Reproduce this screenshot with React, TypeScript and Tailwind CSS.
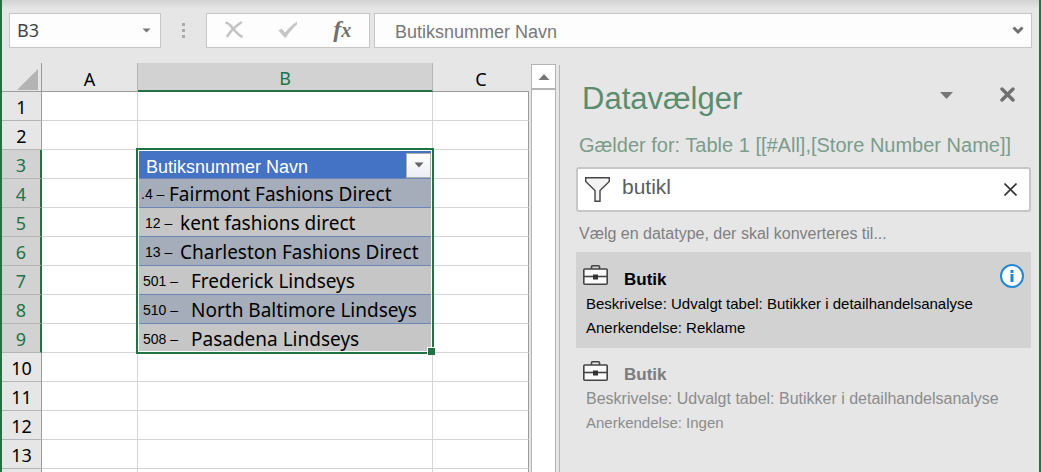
import React from "react";

type StoreRow = { id: string; name: string; prefix: string };

const stores: StoreRow[] = [
  { id: ".4 –", name: "Fairmont Fashions Direct", prefix: "w-7" },
  { id: "12 –", name: "kent fashions direct", prefix: "pl-1 w-[39px]" },
  { id: "13 –", name: "Charleston Fashions Direct", prefix: "pl-1 w-[39px]" },
  { id: "501 –", name: "Frederick Lindseys", prefix: "pl-[2px] w-[50px]" },
  { id: "510 –", name: "North Baltimore Lindseys", prefix: "pl-[2px] w-[50px]" },
  { id: "508 –", name: "Pasadena Lindseys", prefix: "pl-[2px] w-[50px]" },
];

const rowNumbers = Array.from({ length: 13 }, (_, i) => i + 1);

function FormulaBar() {
  return (
    <header className="flex h-[63px] shrink-0 items-start gap-1 bg-gradient-to-b from-[#d2d2d2] to-[#e6e6e6] to-[9px] pt-[13px] pr-[7px] pl-[7px]">
      <div className="flex h-[35px] w-[152px] shrink-0 items-center border border-[#c6c6c6] bg-[#fdfdfd] pr-2">
        <input
          aria-label="Navneboks"
          defaultValue="B3"
          className="min-w-0 flex-1 bg-transparent pl-[7px] font-['Noto_Sans',sans-serif] text-[18px] text-[#444] outline-none"
        />
        <button aria-label="Vis navne" className="flex h-6 w-3 items-center justify-center">
          <svg width="9" height="5" viewBox="0 0 9 5">
            <path d="M0.5 0.5h8L4.5 4.5z" fill="#777" />
          </svg>
        </button>
      </div>
      <div className="flex h-[35px] w-[37px] shrink-0 items-center justify-center">
        <svg width="3" height="15" viewBox="0 0 3 15" fill="#ababab">
          <rect width="3" height="3" />
          <rect y="6" width="3" height="3" />
          <rect y="12" width="3" height="3" />
        </svg>
      </div>
      <div className="flex h-[35px] w-[164px] shrink-0 items-center justify-around border border-[#c6c6c6] bg-[#fdfdfd] pb-[2px]">
        <button aria-label="Annuller">
          <svg width="18" height="17" viewBox="0 0 18 17" fill="none" stroke="#c3c3c3" strokeLinecap="round">
            <path d="M1.500 2C3 1.500 5.500 4.500 8 7.500C10.500 10.500 13 13.500 16.500 15.500" strokeWidth="2.600" />
            <path d="M16 1.500C11 5 5.500 10 2.500 15" strokeWidth="2.600" />
          </svg>
        </button>
        <button aria-label="Accepter">
          <svg width="20" height="17" viewBox="0 0 20 17">
            <path d="M0.500 9.500L3.500 7.500L7 11.500C10.500 7.500 14 3.500 19 0.500V3.500C15 7 11 11.500 8 16.500H6.500z" fill="#c6c6c6" />
          </svg>
        </button>
        <button
          aria-label="Indsæt funktion"
          className="font-['Liberation_Serif',serif] text-[24px] leading-6 font-bold text-[#707070] italic"
        >
          f<span className="text-[20px]">x</span>
        </button>
      </div>
      <div className="flex h-[35px] min-w-0 flex-1 items-center border border-[#c6c6c6] bg-[#fdfdfd] pr-[7px]">
        <input
          aria-label="Formellinje"
          defaultValue="Butiksnummer Navn"
          className="min-w-0 flex-1 bg-transparent pt-[3px] pl-5 text-[18px] text-[#78787c] outline-none"
        />
        <button aria-label="Udvid formellinje">
          <svg width="12" height="9" viewBox="0 0 12 9">
            <path d="M1.500 1.500L6 6L10.500 1.500" fill="none" stroke="#6f6f6f" strokeWidth="3" />
          </svg>
        </button>
      </div>
    </header>
  );
}

function RowHeader({ n }: { n: number }) {
  const selected = n >= 3 && n <= 9;
  return (
    <th
      scope="row"
      className={
        selected
          ? "border-r-2 border-b border-r-[#217346] border-b-[#b5b5b5] bg-[#d2d2d2] p-0 pt-[2px] font-normal text-[#217346]"
          : "border-r border-b border-r-[#9b9b9b] border-b-[#b5b5b5] bg-[#e6e6e6] p-0 pt-[2px] font-normal text-black"
      }
    >
      {n}
    </th>
  );
}

function StoreCell({ n }: { n: number }) {
  if (n === 3) {
    return (
      <td className="border-r border-b border-r-[#d4d4d4] border-b-[#6c86b8] bg-[#4472c4] p-0">
        <div className="flex h-[28px] items-center justify-between pr-px pl-2">
          <span className="pt-[6px] font-['Liberation_Sans',sans-serif] text-[18px] text-white">
            Butiksnummer Navn
          </span>
          <button
            aria-label="Filtrer"
            className="mt-[2px] flex h-[25px] w-[25px] items-center justify-center border border-[#b0b0b0] bg-gradient-to-b from-white to-[#eceef4]"
          >
            <svg width="10" height="6" viewBox="0 0 10 6">
              <path d="M0.500 0.500h9L5 5.500z" fill="#666" />
            </svg>
          </button>
        </div>
      </td>
    );
  }
  if (n > 3 && n < 10) {
    const store = stores[n - 4];
    return (
      <td
        className={
          n % 2 === 0
            ? "border-r border-b border-r-[#d4d4d4] border-b-[#6c86b8] bg-[#a5adbb] p-0"
            : "border-r border-b border-r-[#d4d4d4] border-b-[#6c86b8] bg-[#c6c6c6] p-0"
        }
      >
        <div className="flex h-7 items-center pt-[2px] pl-[3px] text-left leading-[26px] whitespace-nowrap text-black">
          <span className={`${store.prefix} shrink-0 font-['Liberation_Sans',sans-serif] text-[14px]`}>
            {store.id}
          </span>
          <span className="font-['Noto_Sans',sans-serif] text-[19px]">{store.name}</span>
        </div>
      </td>
    );
  }
  return <td className="border-r border-b border-[#d4d4d4] p-0" />;
}

function Sheet() {
  return (
    <div className="relative shrink-0 self-start">
      <table className="table-fixed border-separate border-spacing-0 bg-white text-center font-['Noto_Sans',sans-serif] text-[18px] leading-6">
        <colgroup>
          <col className="w-10" />
          <col className="w-24" />
          <col className="w-[295px]" />
          <col className="w-24" />
        </colgroup>
        <thead>
          <tr className="h-[29px] bg-[#e6e6e6]">
            <th aria-label="Marker alt" className="border-r border-b border-[#9b9b9b] p-0">
              <svg className="mt-1 ml-[15px]" width="21" height="21" viewBox="0 0 21 21">
                <path d="M21 0V21H0z" fill="#b4b4b4" />
              </svg>
            </th>
            <th className="border-r border-b border-r-[#b5b5b5] border-b-[#9b9b9b] p-0 pt-[3px] font-normal">A</th>
            <th className="border-r border-b-2 border-r-[#b5b5b5] border-b-[#217346] bg-[#d2d2d2] p-0 pt-[3px] font-normal text-[#217346]">
              B
            </th>
            <th className="border-b border-[#9b9b9b] p-0 pt-[3px] font-normal">C</th>
          </tr>
        </thead>
        <tbody>
          {rowNumbers.map((n) => (
            <tr key={n} className="h-[29px]">
              <RowHeader n={n} />
              <td className="border-r border-b border-[#d4d4d4] p-0" />
              <StoreCell n={n} />
              <td className="border-r border-b border-r-[#9b9b9b] border-b-[#d4d4d4] p-0" />
            </tr>
          ))}
          <tr className="h-[29px]">
            <td className="border-r border-[#9b9b9b] bg-[#e6e6e6] p-0" />
            <td className="border-r border-[#d4d4d4] p-0" />
            <td className="border-r border-[#d4d4d4] p-0" />
            <td className="border-r border-[#9b9b9b] p-0" />
          </tr>
        </tbody>
      </table>
      <div className="pointer-events-none absolute top-[85px] left-[134px] h-[206px] w-[298px] border-2 border-[#217346]">
        <div className="h-full border border-white" />
        <div className="absolute -right-[3px] -bottom-[3px] h-2 w-2 border-t border-l border-white bg-[#217346]" />
      </div>
    </div>
  );
}

function ScrollBar() {
  return (
    <div className="mt-px ml-[2px] flex w-[25px] shrink-0 flex-col border border-b-0 border-[#b4b4b4] bg-white">
      <button
        aria-label="Rul op"
        className="flex h-[25px] items-center justify-center border-b-2 border-[#b4b4b4]"
      >
        <svg width="12" height="6" viewBox="0 0 12 6">
          <path d="M0.500 6L6 0L11.500 6z" fill="#777" />
        </svg>
      </button>
    </div>
  );
}

function Briefcase() {
  return (
    <svg width="25" height="20" viewBox="0 0 25 20" fill="none" stroke="#444" strokeWidth="1.600">
      <path d="M8.500 4V1.800Q8.500 0.800 9.500 0.800H15.500Q16.500 0.800 16.500 1.800V4" />
      <rect x="0.800" y="4" width="23.400" height="15.200" rx="1" fill="#fafafa" />
      <path d="M1 11.500H24" />
      <rect x="10" y="9.500" width="5" height="5" fill="#333" stroke="none" />
    </svg>
  );
}

function DataPane() {
  return (
    <aside className="mt-[2px] ml-[3px] min-w-0 flex-1 border-l border-[#b4b4b4] pr-2 pl-4">
      <div className="flex h-[68px] items-center">
        <h1 className="flex-1 pt-px pl-[6px] text-[31px] text-[#5a8c70]">Datavælger</h1>
        <button aria-label="Rudeindstillinger" className="mb-2 flex w-5 justify-center">
          <svg width="13" height="7" viewBox="0 0 13 7">
            <path d="M0 0H13L6.500 7z" fill="#777" />
          </svg>
        </button>
        <button aria-label="Luk rude" className="mr-4 mb-[10px] ml-[44px]">
          <svg width="15" height="15" viewBox="0 0 15 15">
            <path
              d="M2 2L13 13M13 2L2 13"
              stroke="#707070"
              strokeWidth="3.400"
              strokeLinecap="round"
            />
          </svg>
        </button>
      </div>
      <p className="h-[34px] truncate pl-[3px] text-[20px] leading-6 text-[#7b9c8a]">
        Gælder for: Table 1 [[#All],[Store Number Name]]
      </p>
      <div className="flex h-[45px] items-center rounded-[3px] border-2 border-[#c6c6c6] bg-white pr-3 pl-[7px]">
        <svg width="25" height="25" viewBox="0 0 25 25" fill="#f4f4f4" stroke="#444" strokeWidth="1.400">
          <path d="M0.700 0.700H24.300V4.500L15 13.500V24.300H10V13.500L0.700 4.500z" />
        </svg>
        <input
          aria-label="Søg efter datatype"
          defaultValue="butikl"
          className="min-w-0 flex-1 bg-transparent pb-[6px] pl-3 text-[21px] text-[#5c5c60] outline-none"
        />
        <button aria-label="Ryd søgning">
          <svg width="13" height="13" viewBox="0 0 13 13">
            <path d="M0.500 0.500L12.500 12.500M12.500 0.500L0.500 12.500" stroke="#333" strokeWidth="1.600" />
          </svg>
        </button>
      </div>
      <p className="pt-[10px] pb-[6px] pl-[3px] text-[16px] leading-6 text-[#808080]">
        Vælg en datatype, der skal konverteres til...
      </p>
      <article className="h-24 bg-[#d2d2d2] pt-[13px] pl-[10px] text-[15px] leading-6 text-black">
        <div className="flex items-start pr-[7px]">
          <div className="-ml-[3px] flex flex-1 items-start gap-4">
            <Briefcase />
            <h2 className="pt-[3px] text-[17px] leading-6 font-bold">Butik</h2>
          </div>
          <button
            aria-label="Vis oplysninger"
            className="-mt-px flex h-6 w-6 items-center justify-center rounded-full border-2 border-[#2389d0] bg-[#fafafa]"
          >
            <svg width="4" height="12" viewBox="0 0 4 12" fill="#1f88d0">
              <rect x="0.500" width="3" height="3" />
              <rect x="0.500" y="4" width="3" height="8" />
            </svg>
          </button>
        </div>
        <p className="truncate">Beskrivelse: Udvalgt tabel: Butikker i detailhandelsanalyse</p>
        <p>Anerkendelse: Reklame</p>
      </article>
      <article className="h-24 pt-[13px] pl-[10px] text-[15px] leading-6 text-[#8c8c8c]">
        <div className="-ml-[3px] flex items-start gap-4">
          <Briefcase />
          <h2 className="pt-[2px] text-[17px] leading-6 font-bold text-[#7c7c7c]">Butik</h2>
        </div>
        <p className="truncate text-[16px]">Beskrivelse: Udvalgt tabel: Butikker i detailhandelsanalyse</p>
        <p>Anerkendelse: Ingen</p>
      </article>
    </aside>
  );
}

export default function App() {
  return (
    <div className="flex h-screen flex-col overflow-hidden border-x-2 border-[#217346] bg-[#e6e6e6] font-['Liberation_Sans',sans-serif]">
      <FormulaBar />
      <main className="flex min-h-0 flex-1">
        <Sheet />
        <ScrollBar />
        <DataPane />
      </main>
    </div>
  );
}
